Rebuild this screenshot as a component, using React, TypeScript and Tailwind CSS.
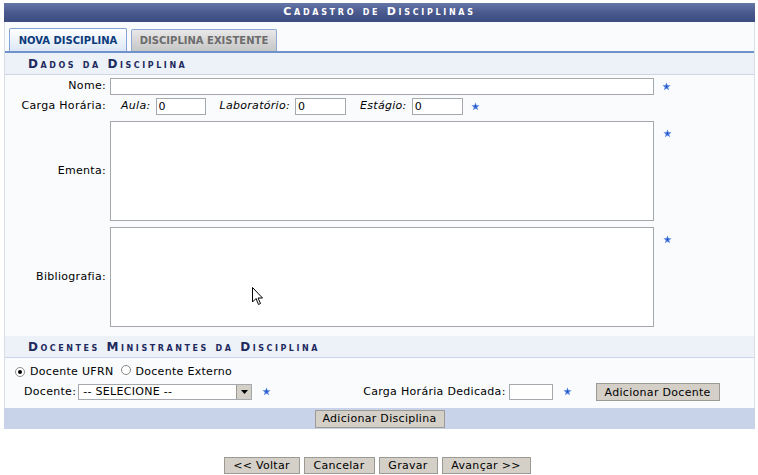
import React from "react";

const Star = () => (
  <svg width="9" height="9" viewBox="0 0 10 10" className="inline-block shrink-0">
    <polygon
      points="5,0.5 6.2,3.6 9.5,3.7 6.9,5.8 7.8,9.3 5,7.3 2.2,9.3 3.1,5.8 0.5,3.7 3.8,3.6"
      fill="#4a7be0"
    />
    <polygon points="5,3 6,5 5,7 4,5" fill="#1d4fb8" />
  </svg>
);

const Radio = ({ checked }: { checked?: boolean }) => (
  <span className="inline-flex w-[10px] h-[10px] rounded-full border border-[#8a8a8a] bg-white items-center justify-center shrink-0">
    {checked && <span className="w-[4px] h-[4px] rounded-full bg-black" />}
  </span>
);

const Btn = ({ label, w }: { label: string; w: string }) => (
  <button
    className={`${w} h-[17px] bg-[#d4d0c8] border border-[#9c9a94] text-[11px] leading-none text-black flex items-center justify-center`}
  >
    {label}
  </button>
);

const SectionBar = ({ title }: { title: string }) => (
  <div className="h-[22px] bg-[#edf1f8] border-b border-[#cdd6e6] flex items-center pl-[23px]">
    <span className="text-[12px] font-bold text-[#1e2a5e] tracking-[2.55px] [font-variant:small-caps]">
      {title}
    </span>
  </div>
);

export default function App() {
  return (
    <div
      className="relative w-[758px] h-[475px] bg-white text-[11px] tracking-[0.3px] text-black overflow-hidden"
      style={{ fontFamily: '"DejaVu Sans", Verdana, sans-serif' }}
    >
      <div className="ml-[4px] mt-[3px] w-[751px]">
        {/* Title bar */}
        <div className="h-[19px] bg-gradient-to-b from-[#6676a6] via-[#4a5a8e] to-[#3c4c80] flex items-center justify-center">
          <span className="text-white font-bold text-[11px] tracking-[2.7px] [font-variant:small-caps]">
            Cadastro de Disciplinas
          </span>
        </div>

        <div className="bg-[#f9fbfd] border-x border-[#d8dee8] pb-[7px]">
          {/* Tabs */}
          <div className="h-[31px] flex items-end gap-[4px] pl-[4px] border-b-2 border-[#7092cc] tracking-normal">
            <div className="w-[118px] h-[23px] rounded-t-[2px] border border-b-0 border-[#84a2d4] bg-gradient-to-b from-white to-[#dce7f5] flex items-center justify-center text-[10px] font-bold text-[#0c3a7a]">
              NOVA DISCIPLINA
            </div>
            <div className="w-[146px] h-[22px] rounded-t-[2px] border border-b-0 border-[#8ea8d6] bg-gradient-to-b from-[#e8e8e8] to-[#c6c6c6] flex items-center justify-center text-[10px] font-bold text-[#6c6c6c]">
              DISCIPLINA EXISTENTE
            </div>
          </div>

          <SectionBar title="Dados da Disciplina" />

          {/* Nome */}
          <div className="flex items-center mt-[3px] h-[17px]">
            <div className="w-[101px] text-right">Nome:</div>
            <input className="ml-[4px] w-[544px] h-[17px] border border-[#a5a9ae] bg-white" />
            <span className="ml-[8px]">
              <Star />
            </span>
          </div>

          {/* Carga Horária */}
          <div className="flex items-center mt-[3px] h-[17px]">
            <div className="w-[101px] text-right">Carga Horária:</div>
            <i className="ml-[15px]">Aula:</i>
            <input
              defaultValue="0"
              className="ml-[5px] w-[50px] h-[17px] border border-[#a5a9ae] bg-white px-[2px] text-[11px]"
            />
            <i className="ml-[14px]">Laboratório:</i>
            <input
              defaultValue="0"
              className="ml-[5px] w-[51px] h-[17px] border border-[#a5a9ae] bg-white px-[2px] text-[11px]"
            />
            <i className="ml-[14px]">Estágio:</i>
            <input
              defaultValue="0"
              className="ml-[5px] w-[51px] h-[17px] border border-[#a5a9ae] bg-white px-[2px] text-[11px]"
            />
            <span className="ml-[8px]">
              <Star />
            </span>
          </div>

          {/* Ementa */}
          <div className="flex mt-[6px]">
            <div className="w-[101px] text-right self-center">Ementa:</div>
            <textarea className="ml-[4px] w-[544px] h-[100px] border border-[#a5a9ae] bg-white resize-none" />
            <span className="ml-[9px] mt-[4px]">
              <Star />
            </span>
          </div>

          {/* Bibliografia */}
          <div className="flex mt-[6px]">
            <div className="w-[101px] text-right self-center">Bibliografia:</div>
            <textarea className="ml-[4px] w-[544px] h-[100px] border border-[#a5a9ae] bg-white resize-none" />
            <span className="ml-[9px] mt-[4px]">
              <Star />
            </span>
          </div>

          <div className="mt-[9px]">
            <SectionBar title="Docentes Ministrantes da Disciplina" />
          </div>

          {/* Radios */}
          <div className="flex items-center h-[16px] mt-[6px] pl-[10px]">
            <Radio checked />
            <span className="ml-[5px]">Docente UFRN</span>
            <span className="ml-[8px]">
              <Radio />
            </span>
            <span className="ml-[4px]">Docente Externo</span>
          </div>

          {/* Docente */}
          <div className="flex items-center h-[18px] mt-[3px]">
            <span className="ml-[19px]">Docente:</span>
            <div className="ml-[2px] w-[174px] h-[16px] border border-[#a5a9ae] bg-white flex items-center">
              <span className="flex-1 pl-[4px]">-- SELECIONE --</span>
              <span className="w-[15px] h-[14px] bg-[#d4d0c8] border-l border-[#9c9a94] flex items-center justify-center">
                <svg width="7" height="4" viewBox="0 0 7 4">
                  <polygon points="0,0 7,0 3.5,4" fill="#000" />
                </svg>
              </span>
            </div>
            <span className="ml-[10px]">
              <Star />
            </span>
            <span className="ml-[92px]">Carga Horária Dedicada:</span>
            <input className="ml-[3px] w-[44px] h-[16px] border border-[#a5a9ae] bg-white" />
            <span className="ml-[10px]">
              <Star />
            </span>
            <span className="ml-[24px]">
              <button className="w-[124px] h-[18px] bg-[#d4d0c8] border border-[#9c9a94] text-[11px] leading-none flex items-center justify-center">
                Adicionar Docente
              </button>
            </span>
          </div>
        </div>

        {/* Footer bar */}
        <div className="h-[21px] bg-[#c8d3ea] flex items-center justify-center">
          <button className="w-[130px] h-[18px] bg-[#d4d0c8] border border-[#9c9a94] text-[11px] leading-none flex items-center justify-center">
            Adicionar Disciplina
          </button>
        </div>
      </div>

      {/* Bottom buttons */}
      <div className="mt-[28px] flex justify-center gap-[4px] pr-[4px]">
        <Btn label="<< Voltar" w="w-[76px]" />
        <Btn label="Cancelar" w="w-[71px]" />
        <Btn label="Gravar" w="w-[59px]" />
        <Btn label="Avançar >>" w="w-[89px]" />
      </div>

      {/* Mouse cursor */}
      <svg
        className="absolute left-[252px] top-[287px]"
        width="12"
        height="19"
        viewBox="0 0 12 19"
      >
        <polygon
          points="0.5,0.5 0.5,15 4,11.5 6.5,17.5 8.5,16.5 6,11 10.5,11"
          fill="#fff"
          stroke="#000"
          strokeWidth="1"
        />
      </svg>
    </div>
  );
}
